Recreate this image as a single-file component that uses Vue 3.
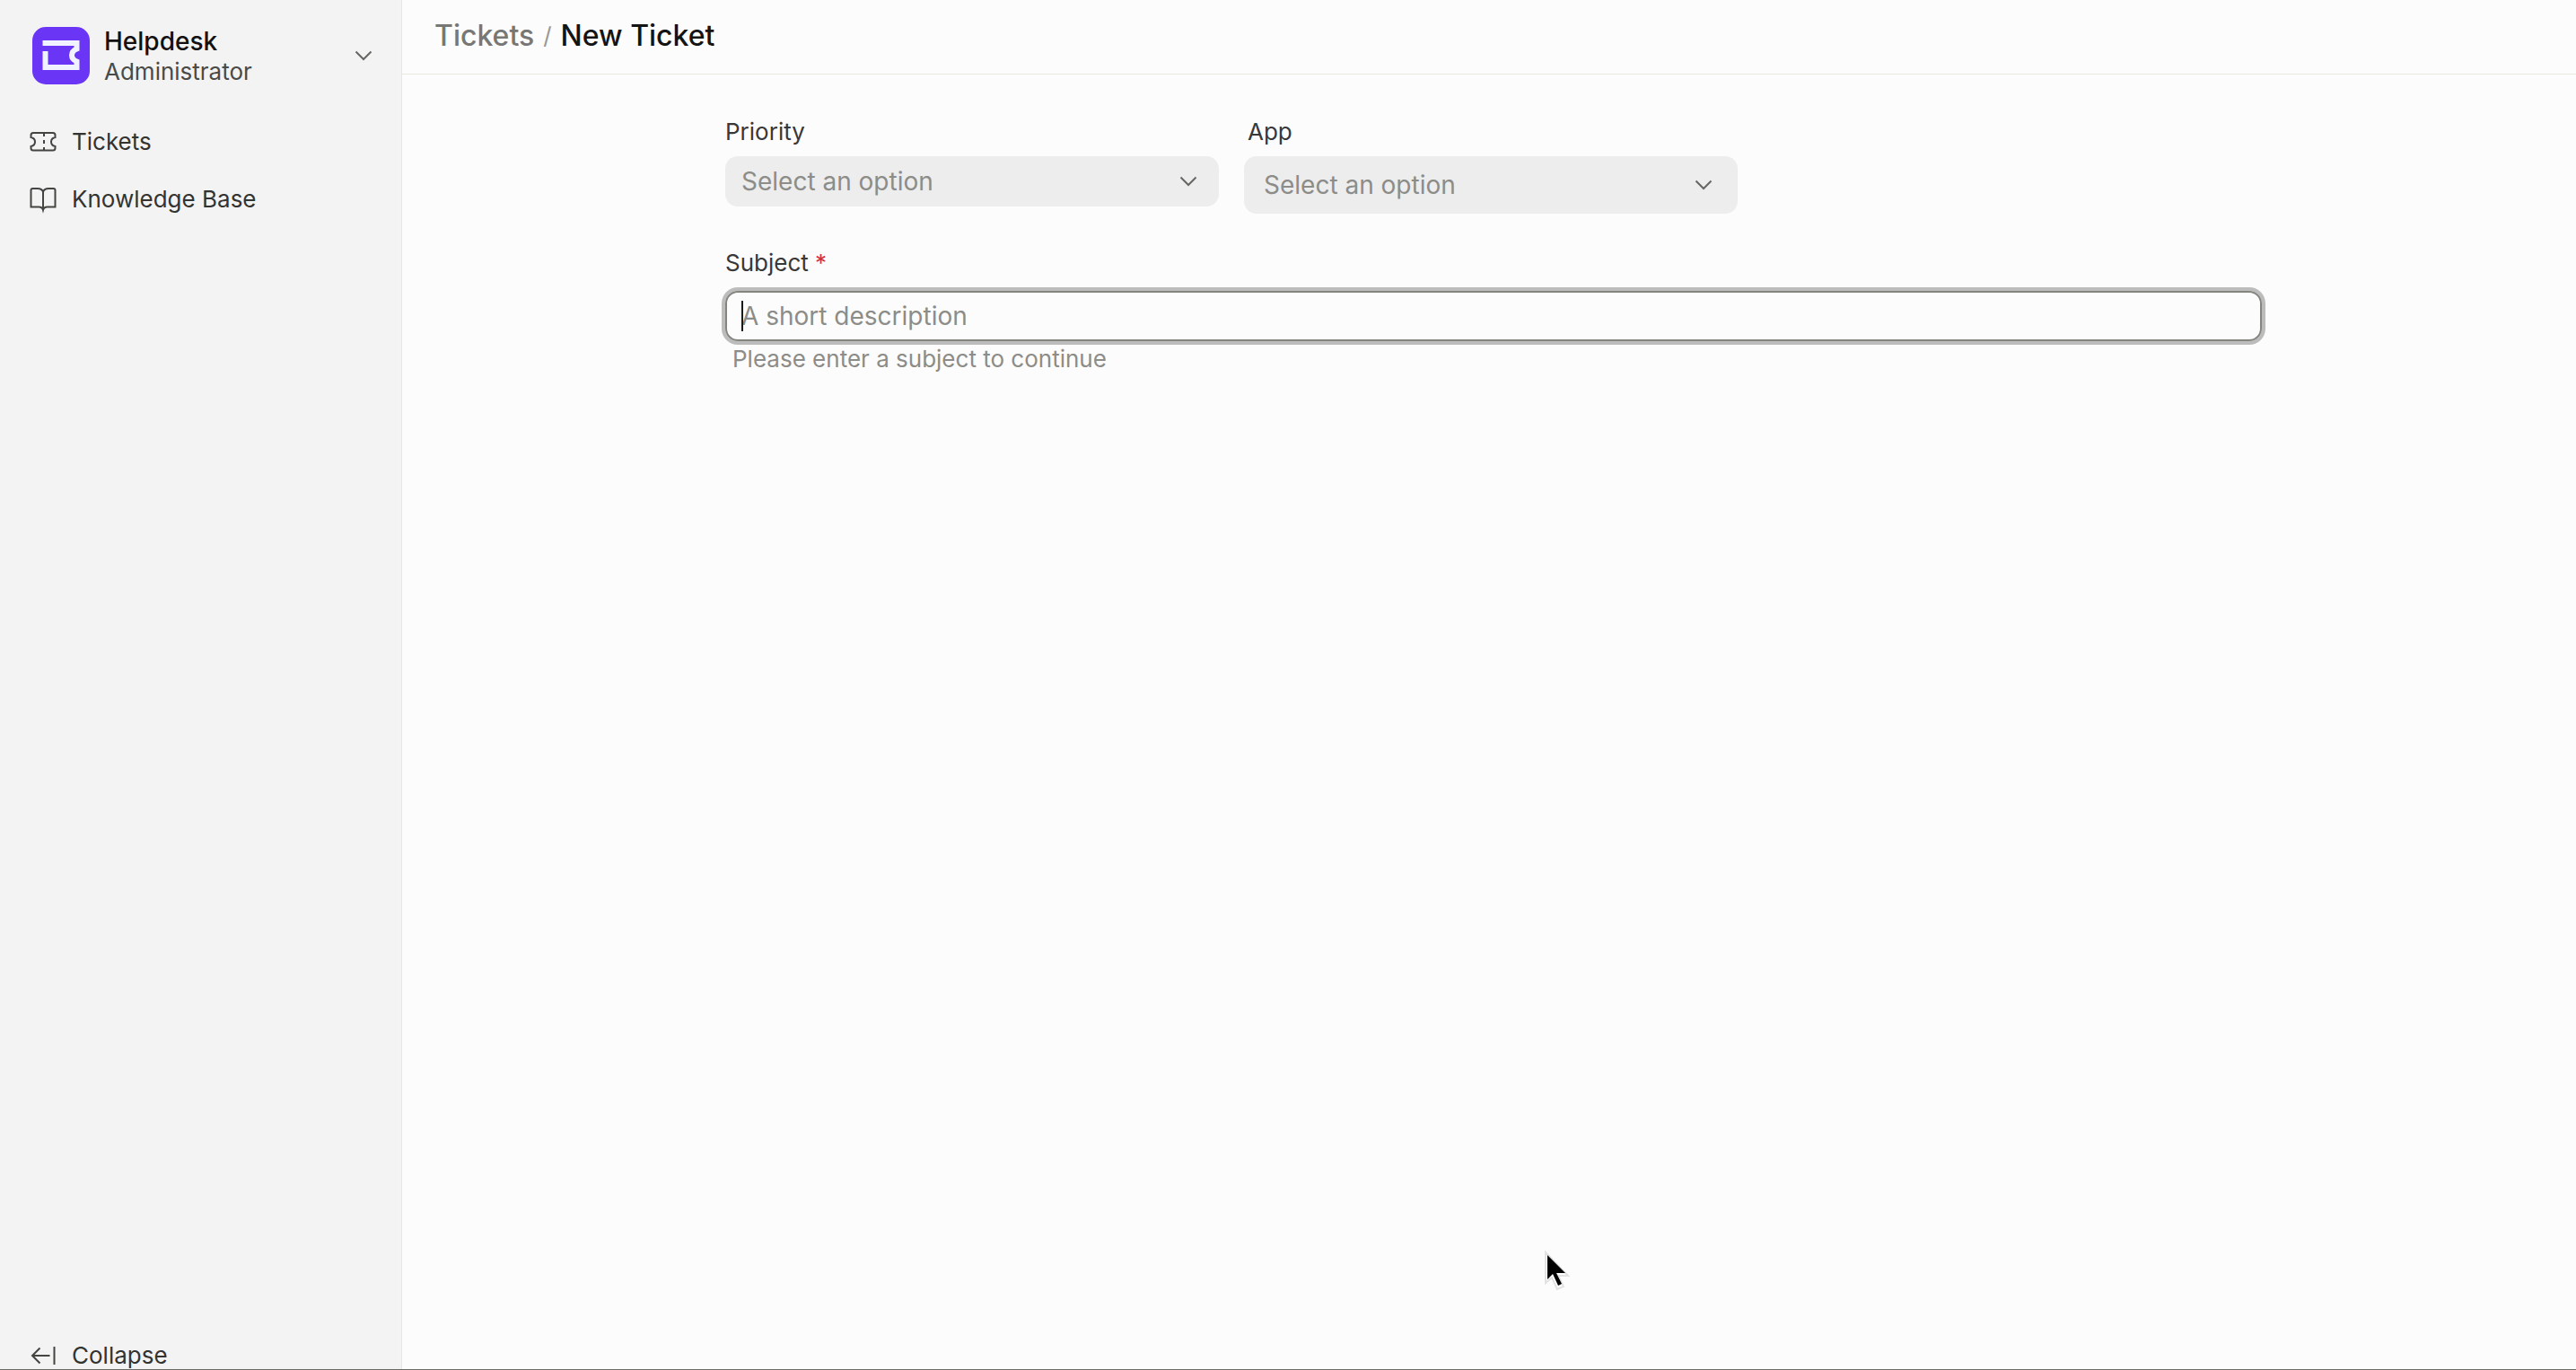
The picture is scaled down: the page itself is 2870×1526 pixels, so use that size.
<script setup>
import { ref } from 'vue';

const priority = ref('');
const app = ref('');
const subject = ref('');
const focused = ref(true);

const priorities = ['Low', 'Medium', 'High', 'Urgent'];
const apps = ['Helpdesk', 'CRM', 'Insights'];
</script>

<template>
  <div class="layout">
    <aside class="sidebar">
      <button type="button" class="user-menu">
        <svg class="logo" viewBox="0 0 64 64" aria-hidden="true">
          <rect width="64" height="64" rx="15" fill="#6b35f5" />
          <path d="M11.500 18H49.500V24.500C46 26 44 28 44 31.500S46 37 49.500 38.500V45H14.500V27" fill="none" stroke="#f1f2ff" stroke-width="6" />
        </svg>
        <span class="user-text">
          <span class="user-title">Helpdesk</span>
          <span class="user-name">Administrator</span>
        </span>
        <svg class="chevron" viewBox="0 0 20 12" aria-hidden="true">
          <path d="M1.500 1.500L10 10L18.500 1.500" />
        </svg>
      </button>

      <nav class="nav">
        <a href="#tickets" class="nav-item">
          <svg class="nav-icon" viewBox="0 0 32 32" aria-hidden="true">
            <path d="M5 6H27Q29.500 6 29.500 8.500V11Q25 12 25 16T29.500 21V23Q29.500 25.500 27 25.500H5Q2.500 25.500 2.500 23V21Q7 20 7 16T2.500 11V8.500Q2.500 6 5 6Z" />
            <path d="M17 6V10M17 14V18M17 22V25" />
          </svg>
          <span>Tickets</span>
        </a>
        <a href="#knowledge-base" class="nav-item">
          <svg class="nav-icon" viewBox="0 0 32 32" aria-hidden="true">
            <path d="M16 7.500Q14.500 4 10 4H4.500Q2.500 4 2.500 6V24.500H11.500Q15 24.500 16 28Q17 24.500 20.500 24.500H29.500V6Q29.500 4 27.500 4H22Q17.500 4 16 7.500ZM16 7.500V28" />
          </svg>
          <span>Knowledge Base</span>
        </a>
      </nav>

      <button type="button" class="nav-item collapse">
        <svg class="nav-icon" viewBox="0 0 32 32" aria-hidden="true">
          <path d="M23.500 16H4M12.500 7.500L4 16L12.500 24.500M28.500 6V26" />
        </svg>
        <span>Collapse</span>
      </button>
    </aside>

    <main class="main">
      <header class="page-header">
        <a href="#tickets" class="crumb">Tickets</a>
        <span class="slash">/</span>
        <h1 class="crumb current">New Ticket</h1>
      </header>

      <form class="ticket-form" @submit.prevent>
        <div class="fields">
          <div class="field">
            <label for="priority">Priority</label>
            <div class="select-wrap">
              <select id="priority" v-model="priority">
                <option value="">Select an option</option>
                <option v-for="item in priorities" :key="item">{{ item }}</option>
              </select>
              <svg class="chevron" viewBox="0 0 20 12" aria-hidden="true">
                <path d="M1.500 1.500L10 10L18.500 1.500" />
              </svg>
            </div>
          </div>
          <div class="field field-app">
            <label for="app">App</label>
            <div class="select-wrap large">
              <select id="app" v-model="app">
                <option value="">Select an option</option>
                <option v-for="item in apps" :key="item">{{ item }}</option>
              </select>
              <svg class="chevron" viewBox="0 0 20 12" aria-hidden="true">
                <path d="M1.500 1.500L10 10L18.500 1.500" />
              </svg>
            </div>
          </div>
        </div>

        <div class="field subject">
          <label for="subject">Subject <span class="required">*</span></label>
          <div class="input-wrap" :class="{ focused }">
            <input id="subject" v-model="subject" type="text" placeholder="A short description" />
            <span v-if="focused && !subject" class="caret"></span>
          </div>
          <p v-if="!subject" class="hint">Please enter a subject to continue</p>
        </div>
      </form>
    </main>

    <svg class="pointer" viewBox="0 0 32 48" aria-hidden="true">
      <path d="M4 2V36L11 30L17 43L24 40L18 28H29Z" fill="#ffffff" stroke="#e2e2e2" stroke-width="2" />
      <path d="M6 5V32L12 26L18 39L22 37L16 25H26Z" fill="#000000" />
    </svg>
  </div>
</template>

<style>
body {
  background: #fcfcfc;
}
</style>

<style scoped>
.layout {
  position: relative;
  box-sizing: border-box;
  display: flex;
  min-height: 100vh;
  border-bottom: 1px solid #6b6b66;
  font-family: Inter, "Liberation Sans", sans-serif;
  font-size: 26px;
  line-height: 32px;
  color: #383838;
}

button, input, select {
  font: inherit;
  color: inherit;
  border: none;
  background: none;
  margin: 0;
}

a {
  color: inherit;
  text-decoration: none;
}

.sidebar {
  box-sizing: border-box;
  display: flex;
  flex-direction: column;
  flex: none;
  width: 448px;
  padding: 28px 32px 0;
  border-right: 1px solid #e6e6e4;
  background: #f3f3f3;
}

.user-menu {
  display: flex;
  align-items: center;
  padding: 0 0 0 4px;
  text-align: left;
}

.logo {
  width: 64px;
  height: 64px;
  margin-right: 16px;
}

.user-text {
  display: flex;
  flex: 1;
  flex-direction: column;
}

.user-title {
  font-size: 28px;
  line-height: 36px;
  font-weight: 500;
  color: #111111;
}

.user-name {
  color: #4a4a48;
}

.chevron {
  width: 20px;
  height: 12px;
  fill: none;
  stroke: #666662;
  stroke-width: 2;
}

.nav {
  display: flex;
  flex-direction: column;
  gap: 8px;
  margin-top: 34px;
}

.nav-item {
  display: flex;
  align-items: center;
  gap: 16px;
  height: 56px;
  padding: 0;
  color: #333331;
}

.nav-icon {
  width: 32px;
  height: 32px;
  fill: none;
  stroke: #444441;
  stroke-width: 2;
}

.collapse {
  height: 30px;
  margin-top: auto;
}

.main {
  flex: 1;
  min-width: 0;
}

.page-header {
  box-sizing: border-box;
  display: flex;
  align-items: center;
  gap: 10px;
  height: 83px;
  padding: 0 36px 2px;
  border-bottom: 1px solid #e8e8de;
}

.crumb {
  margin: 0;
  font-size: 32px;
  line-height: 40px;
  font-weight: 500;
  color: #777775;
}

.crumb.current {
  color: #141414;
}

.slash {
  color: #999996;
}

.ticket-form {
  padding: 48px 350px 0 360px;
}

.fields {
  display: flex;
  gap: 28px;
}

.fields .field {
  flex: 0 1 550px;
}

.field-app label {
  padding-left: 4px;
}

.select-wrap {
  position: relative;
  margin-top: 11px;
  color: #8c8c88;
}

.select-wrap select {
  display: block;
  width: 100%;
  height: 56px;
  padding: 0 18px;
  border-radius: 14px;
  background: #ededed;
  font-size: 28px;
  appearance: none;
}

.select-wrap.large select {
  height: 64px;
  padding: 0 22px;
}

.select-wrap .chevron {
  position: absolute;
  top: 50%;
  right: 24px;
  margin-top: -6px;
  pointer-events: none;
}

.select-wrap.large .chevron {
  right: 28px;
}

label {
  display: block;
}

.subject {
  margin-top: 39px;
}

.required {
  color: #d13438;
}

.input-wrap {
  position: relative;
  box-sizing: border-box;
  height: 56px;
  margin-top: 15px;
  border: 2px solid #d4d4d0;
  border-radius: 14px;
}

.input-wrap.focused {
  border-color: #85857f;
  box-shadow: 0 0 0 4px #bcbcbc;
}

.input-wrap input {
  box-sizing: border-box;
  width: 100%;
  height: 52px;
  padding: 0 16px;
  font-size: 28px;
  outline: none;
}

.input-wrap input::placeholder {
  color: #8c8c88;
  opacity: 1;
}

.caret {
  position: absolute;
  top: 9px;
  left: 16px;
  width: 2px;
  height: 34px;
  background: #1a1a1a;
}

.hint {
  margin: 4px 0 0;
  padding-left: 8px;
  color: #8c8c88;
}

.pointer {
  position: absolute;
  right: 1120px;
  bottom: 84px;
  width: 32px;
  height: 48px;
}
</style>
